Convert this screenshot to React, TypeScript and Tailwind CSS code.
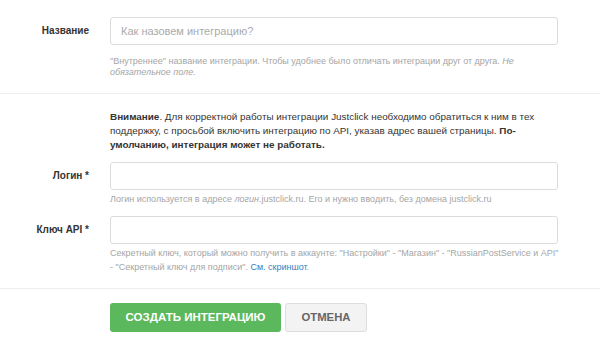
import { ReactNode } from 'react'

function Row({ label, children }: { label: ReactNode; children: ReactNode }) {
  return (
    <div className="grid grid-cols-[89px_448px] gap-x-[21px]">
      <div className="pt-[7px] text-right text-[10px] leading-[14px] font-bold text-[#333]">{label}</div>
      <div>{children}</div>
    </div>
  )
}

function Field({ placeholder }: { placeholder?: string }) {
  return (
    <input
      type="text"
      placeholder={placeholder}
      className="block h-[28px] w-full rounded-[3px] border border-[#dcdcdc] bg-white px-[10px] text-[11px] text-[#555] placeholder:text-[#aaa] outline-none"
    />
  )
}

function App() {
  return (
    <div className="h-[353px] w-[600px] overflow-hidden bg-white font-['Liberation_Sans',Arial,sans-serif]">
      {/* Name section */}
      <div className="pt-[17px] pb-[15px] border-b border-[#eeeeee]">
        <Row label="Название">
          <Field placeholder="Как назовем интеграцию?" />
          <p className="mt-[11px] whitespace-nowrap text-[9px] leading-[11px] text-[#a5a5a5]">
            "Внутреннее" название интеграции. Чтобы удобнее было отличать интеграции друг от друга. <i>Не</i>
            <br />
            <i>обязательное поле.</i>
          </p>
        </Row>
      </div>

      {/* Credentials section */}
      <div className="pt-[16px] pb-[14px] border-b border-[#eeeeee]">
        <Row label="">
          <p className="whitespace-nowrap text-[9.9px] leading-[14px] text-[#333]">
            <b>Внимание</b>. Для корректной работы интеграции Justclick необходимо обратиться к ним в тех
            <br />
            поддержку, с просьбой включить интеграцию по API, указав адрес вашей страницы. <b>По-</b>
            <br />
            <b>умолчанию, интеграция может не работать.</b>
          </p>
        </Row>
        <div className="mt-[10px]">
          <Row label="Логин *">
            <Field />
            <p className="mt-[4px] whitespace-nowrap text-[9px] leading-[11px] text-[#a5a5a5]">
              Логин используется в адресе <i>логин</i>.justclick.ru. Его и нужно вводить, без домена justclick.ru
            </p>
          </Row>
        </div>
        <div className="mt-[11px]">
          <Row label="Ключ API *">
            <Field />
            <p className="mt-[2px] whitespace-nowrap text-[9px] leading-[14px] text-[#a5a5a5]">
              Секретный ключ, который можно получить в аккаунте: "Настройки" - "Магазин" - "RussianPostService и API"
              <br />
              - "Секретный ключ для подписи". <a className="text-[#3a7ebf]">См. скриншот</a>.
            </p>
          </Row>
        </div>
      </div>

      {/* Actions */}
      <div className="pt-[14px]">
        <div className="ml-[110px] flex gap-[4px]">
          <button className="h-[29px] w-[171px] rounded-[3px] bg-[#5cb85c] text-[11.5px] font-bold uppercase text-white">
            Создать интеграцию
          </button>
          <button className="h-[29px] w-[82px] rounded-[3px] border border-[#dddddd] bg-[#f3f3f3] text-[11.3px] font-bold uppercase text-[#666]">
            Отмена
          </button>
        </div>
      </div>
    </div>
  )
}

export default App
